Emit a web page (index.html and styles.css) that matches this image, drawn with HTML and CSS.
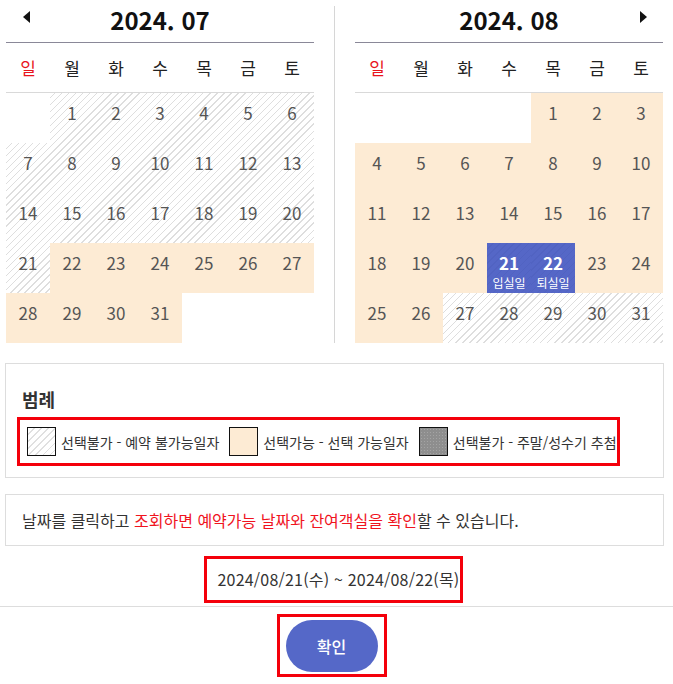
FILE: index.html
```html
<!DOCTYPE html>
<html lang="ko">
<head>
    <meta charset="UTF-8">
    <meta name="viewport" content="width=device-width, initial-scale=1.0">
    <title>날짜 선택</title>
    <link rel="stylesheet" href="styles.css">
</head>
<body>

    <!-- Two month calendars -->
    <div class="calendars">
        <div class="cal">
            <div class="cal-head">
                <span class="arrow prev"></span>
                <h2>2024. 07</h2>
            </div>
            <div class="week">
                <div class="sun">일</div><div>월</div><div>화</div><div>수</div><div>목</div><div>금</div><div>토</div>
            </div>
            <div class="days">
                <div class="day"></div>
                <div class="day off">1</div><div class="day off">2</div><div class="day off">3</div><div class="day off">4</div><div class="day off">5</div><div class="day off">6</div>
                <div class="day off">7</div><div class="day off">8</div><div class="day off">9</div><div class="day off">10</div><div class="day off">11</div><div class="day off">12</div><div class="day off">13</div>
                <div class="day off">14</div><div class="day off">15</div><div class="day off">16</div><div class="day off">17</div><div class="day off">18</div><div class="day off">19</div><div class="day off">20</div>
                <div class="day off">21</div><div class="day open">22</div><div class="day open">23</div><div class="day open">24</div><div class="day open">25</div><div class="day open">26</div><div class="day open">27</div>
                <div class="day open">28</div><div class="day open">29</div><div class="day open">30</div><div class="day open">31</div><div class="day"></div><div class="day"></div><div class="day"></div>
            </div>
        </div>

        <div class="divider"></div>

        <div class="cal">
            <div class="cal-head">
                <h2>2024. 08</h2>
                <span class="arrow next"></span>
            </div>
            <div class="week">
                <div class="sun">일</div><div>월</div><div>화</div><div>수</div><div>목</div><div>금</div><div>토</div>
            </div>
            <div class="days">
                <div class="day"></div><div class="day"></div><div class="day"></div><div class="day"></div>
                <div class="day open">1</div><div class="day open">2</div><div class="day open">3</div>
                <div class="day open">4</div><div class="day open">5</div><div class="day open">6</div><div class="day open">7</div><div class="day open">8</div><div class="day open">9</div><div class="day open">10</div>
                <div class="day open">11</div><div class="day open">12</div><div class="day open">13</div><div class="day open">14</div><div class="day open">15</div><div class="day open">16</div><div class="day open">17</div>
                <div class="day open">18</div><div class="day open">19</div><div class="day open">20</div>
                <div class="day picked">21<span>입실일</span></div>
                <div class="day picked">22<span>퇴실일</span></div>
                <div class="day open">23</div><div class="day open">24</div>
                <div class="day open">25</div><div class="day open">26</div><div class="day off">27</div><div class="day off">28</div><div class="day off">29</div><div class="day off">30</div><div class="day off">31</div>
            </div>
        </div>
    </div>

    <!-- Legend -->
    <div class="legend">
        <h3>범례</h3>
        <div class="legend-items mark">
            <div class="item"><span class="swatch sw-off"></span>선택불가 - 예약 불가능일자</div>
            <div class="item"><span class="swatch sw-open"></span>선택가능 - 선택 가능일자</div>
            <div class="item"><span class="swatch sw-lottery"></span>선택불가 - 주말/성수기 추첨</div>
        </div>
    </div>

    <!-- Notice -->
    <div class="notice">
        날짜를 클릭하고 <em>조회하면 예약가능 날짜와 잔여객실을 확인</em>할 수 있습니다.
    </div>

    <!-- Selected range -->
    <div class="range">
        <div class="range-text mark">2024/08/21(수) ~ 2024/08/22(목)</div>
    </div>

    <div class="actions">
        <div class="mark btn-wrap">
            <button class="confirm">확인</button>
        </div>
    </div>

</body>
</html>
```

FILE: styles.css
```css
body {
    margin: 0;
    font-family: "Noto Sans CJK KR", "Noto Sans", sans-serif;
    color: #333;
    background: #fff;
}

/* Calendars */
.calendars {
    display: flex;
    padding-left: 6px;
}
.cal {
    width: 308px;
}
.divider {
    width: 1px;
    margin: 6px 20px 0 20px;
    background-color: #d6d6d6;
}
.cal-head {
    position: relative;
    height: 42px;
    border-bottom: 1px solid #8a8898;
}
.cal-head h2 {
    margin: 0;
    text-align: center;
    font-size: 24px;
    font-weight: bold;
    line-height: 40px;
    color: #111;
}
.arrow {
    position: absolute;
    top: 11px;
    width: 0;
    height: 0;
    border-top: 6px solid transparent;
    border-bottom: 6px solid transparent;
}
.arrow.prev {
    left: 17px;
    border-right: 7px solid #111;
}
.arrow.next {
    right: 16px;
    border-left: 7px solid #111;
}
.week {
    display: grid;
    grid-template-columns: repeat(7, 44px);
    height: 49px;
    border-bottom: 1px solid #d9d9d9;
}
.week div {
    text-align: center;
    line-height: 49px;
    font-size: 17px;
    color: #222;
}
.week .sun {
    color: #e8141c;
}
.days {
    display: grid;
    grid-template-columns: repeat(7, 44px);
    grid-auto-rows: 50px;
}
.day {
    text-align: center;
    padding-top: 7px;
    font-size: 17px;
    line-height: 26px;
    color: #555;
    box-sizing: border-box;
}
.day.off {
    background: repeating-linear-gradient(135deg, #fff 0, #fff 4px, #dedede 4px, #dedede 5px);
    background-attachment: fixed;
}
.day.open {
    background-color: #fdebd4;
}
.day.picked {
    background: repeating-linear-gradient(135deg, #5567c7 0, #5567c7 4px, #5163c2 4px, #5163c2 5px);
    color: #fff;
    font-weight: bold;
}
.day.picked span {
    display: block;
    font-size: 12px;
    font-weight: normal;
    line-height: 14px;
}

/* Red highlight boxes */
.mark {
    border: 3px solid #f4000b;
}

/* Legend */
.legend {
    margin: 20px 9px 0 5px;
    border: 1px solid #ddd;
    padding: 0 11px 11px 11px;
}
.legend h3 {
    margin: 0;
    padding: 24px 0 0 5px;
    height: 29px;
    font-size: 18px;
    line-height: 22px;
    color: #333;
}
.legend-items {
    display: flex;
    align-items: center;
    width: 590px;
    height: 43px;
    padding-left: 7px;
}
.item {
    display: flex;
    align-items: center;
    flex-shrink: 0;
    white-space: nowrap;
    font-size: 14px;
    color: #333;
    margin-right: 10px;
}
.swatch {
    width: 27px;
    height: 27px;
    border: 1px solid #111;
    margin-right: 5px;
}
.sw-off {
    background: repeating-linear-gradient(135deg, #fff 0, #fff 4px, #e0e0e0 4px, #e0e0e0 5px);
}
.sw-open {
    background-color: #fdebd4;
}
.sw-lottery {
    background-color: #8e8e8e;
    background-image: radial-gradient(#a4a4a4 0.6px, transparent 0.8px);
    background-size: 3px 3px;
}

/* Notice */
.notice {
    margin: 16px 9px 0 5px;
    border: 1px solid #ddd;
    height: 50px;
    padding-left: 16px;
    line-height: 50px;
    font-size: 16px;
    color: #333;
}
.notice em {
    font-style: normal;
    color: #f0141e;
}

/* Range */
.range {
    display: flex;
    justify-content: center;
    padding: 10px 0 3px 0;
    border-bottom: 1px solid #ddd;
}
.range-text {
    width: 253px;
    height: 41px;
    line-height: 41px;
    text-align: center;
    text-indent: 10px;
    font-size: 16px;
    letter-spacing: 0.2px;
    color: #333;
    margin-right: 6px;
}

/* Confirm */
.actions {
    display: flex;
    justify-content: center;
    padding-top: 7px;
}
.btn-wrap {
    padding: 3px 6px 2px 6px;
    margin-right: 10px;
}
.confirm {
    display: block;
    width: 92px;
    height: 52px;
    border: none;
    border-radius: 26px;
    background-color: #5568c8;
    color: #fff;
    font-family: inherit;
    font-size: 16px;
    font-weight: 500;
    cursor: pointer;
}
```
